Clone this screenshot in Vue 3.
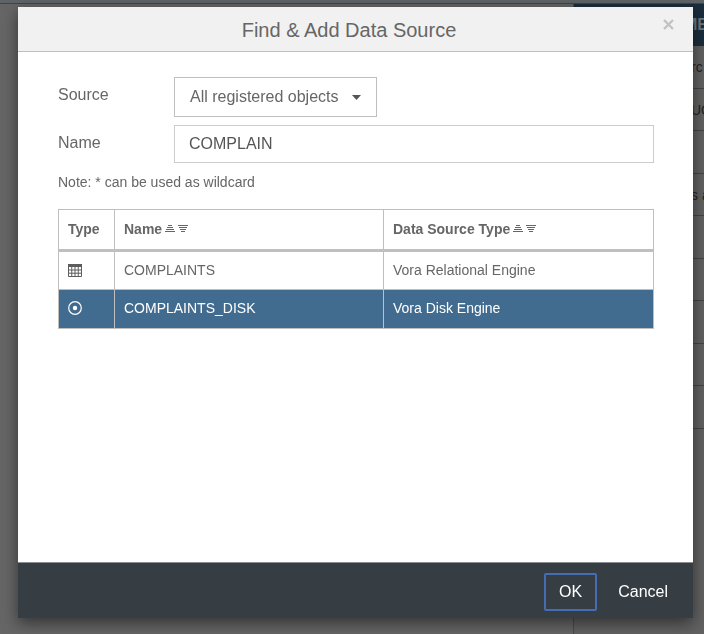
<script setup>
import { ref } from 'vue'

const source = ref('All registered objects')
const name = ref('COMPLAIN')
const selected = ref('COMPLAINTS_DISK')

const columns = [
  { label: 'Type', sortable: false },
  { label: 'Name', sortable: true },
  { label: 'Data Source Type', sortable: true },
]
const rows = [
  { kind: 'table', name: 'COMPLAINTS', type: 'Vora Relational Engine' },
  { kind: 'disk', name: 'COMPLAINTS_DISK', type: 'Vora Disk Engine' },
]
const panelRows = ['rc', 'UC', '', 's a', '', '', '', '', '']
</script>

<template>
  <div class="page">
    <div class="workspace">
      <div class="toolbar"></div>
      <div class="columns">
        <div class="canvas"></div>
        <aside class="side">
          <div class="side-head">ME</div>
          <div v-for="(text, i) in panelRows" :key="i" class="side-row">{{ text }}</div>
        </aside>
      </div>
    </div>

    <div class="overlay">
      <section class="dialog" role="dialog" aria-modal="true" aria-labelledby="dialog-title">
        <header class="dialog-head">
          <h1 id="dialog-title">Find &amp; Add Data Source</h1>
          <button class="close" type="button" aria-label="Close">
            <svg width="11" height="11" viewBox="0 0 11 11">
              <path d="M1 1 L10 10 M10 1 L1 10" fill="none" stroke="#c2c2c2" stroke-width="2.4" />
            </svg>
          </button>
        </header>

        <div class="dialog-body">
          <div class="field">
            <label for="source">Source</label>
            <div class="select">
              <select id="source" v-model="source">
                <option>All registered objects</option>
              </select>
              <svg class="caret" width="9" height="5" viewBox="0 0 9 5">
                <path d="M0 0 H9 L4.5 5 Z" fill="#555" />
              </svg>
            </div>
          </div>
          <div class="field">
            <label for="name">Name</label>
            <input id="name" v-model="name" type="text" />
          </div>
          <p class="note">Note: * can be used as wildcard</p>

          <table>
            <colgroup>
              <col class="col-type" />
              <col class="col-name" />
              <col />
            </colgroup>
            <thead>
              <tr>
                <th v-for="column in columns" :key="column.label" scope="col">
                  <span class="th">
                    {{ column.label }}
                    <svg v-if="column.sortable" width="23" height="8" viewBox="0 0 23 8">
                      <path
                        d="M3 .5 H7 M2 2.5 H8 M1 4.5 H9 M0 6.5 H10 M13 .5 H23 M14 2.5 H22 M15 4.5 H21 M16 6.5 H20"
                        fill="none"
                        stroke="#666"
                        stroke-width="1"
                      />
                    </svg>
                  </span>
                </th>
              </tr>
            </thead>
            <tbody>
              <tr
                v-for="row in rows"
                :key="row.name"
                :class="{ selected: row.name === selected }"
                @click="selected = row.name"
              >
                <td class="kind">
                  <svg v-if="row.kind === 'table'" width="14" height="14" viewBox="0 0 14 14">
                    <path d="M0 1 H14 V14 H0 Z" fill="#fff" />
                    <path d="M0 1 H14 V4 H0 Z" fill="#5c5c5c" />
                    <path
                      d="M.5 4 V13.5 H13.5 V4 M3.75 4 V13 M7 4 V13 M10.25 4 V13 M1 7 H13 M1 10.2 H13"
                      fill="none"
                      stroke="#5c5c5c"
                      stroke-width="1"
                    />
                  </svg>
                  <svg v-else width="14" height="14" viewBox="0 0 14 14">
                    <circle cx="7" cy="7" r="6.3" fill="none" stroke="#fff" stroke-width="1.2" />
                    <circle cx="7" cy="7" r="2.2" fill="#fff" />
                  </svg>
                </td>
                <td>{{ row.name }}</td>
                <td>{{ row.type }}</td>
              </tr>
            </tbody>
          </table>
        </div>

        <footer class="dialog-foot">
          <button class="action primary" type="button">OK</button>
          <button class="action" type="button">Cancel</button>
        </footer>
      </section>
    </div>
  </div>
</template>

<style>
body {
  margin: 0;
  overflow: hidden;
}
</style>

<style scoped>
.page {
  min-height: 100vh;
  font-family: "Liberation Sans", Arial, sans-serif;
  color: #666;
  background: #666;
}
.page *,
.page {
  box-sizing: border-box;
}
.workspace {
  display: flex;
  flex-direction: column;
  min-height: 100vh;
}
.toolbar {
  height: 4px;
  background: #5f6467;
  border-bottom: 1px solid #444;
}
.columns {
  flex: 1;
  display: grid;
  grid-template-columns: 1fr 131px;
}
.side {
  border-left: 1px solid #4a4a4a;
  background: #626262;
  overflow: hidden;
  white-space: nowrap;
}
.side-head,
.side-row {
  height: 42px;
  line-height: 42px;
}
.side-head {
  padding-left: 110px;
  background: #1b2e3d;
  color: #707a82;
  font-size: 16px;
  font-weight: bold;
}
.side-row {
  padding-left: 117px;
  border-bottom: 1px solid #444;
  color: #242424;
  font-size: 14px;
}
.side-row:nth-child(even) {
  height: 43px;
}
.overlay {
  position: fixed;
  inset: 0;
  display: flex;
  padding: 7px 11px 16px 18px;
}
.dialog {
  flex: 1;
  display: flex;
  flex-direction: column;
  background: #fff;
  box-shadow: 0 5px 15px rgba(0, 0, 0, 0.5);
}
.dialog-head {
  position: relative;
  padding: 9px 53px 7px 40px;
  background: #f1f1f1;
  border-bottom: 1px solid #bfbfbf;
  text-align: center;
}
h1 {
  margin: 0;
  font-size: 20px;
  line-height: 28px;
  font-weight: normal;
}
.close {
  position: absolute;
  top: 7px;
  right: 14px;
  display: flex;
  padding: 5px;
  border: 0;
  background: none;
}
.dialog-body {
  flex: 1;
  padding: 25px 39px 24px 40px;
}
.field {
  display: grid;
  grid-template-columns: 116px 1fr;
  margin-bottom: 8px;
}
label {
  padding-top: 8px;
  font-size: 16px;
  line-height: 20px;
}
.select {
  position: relative;
  justify-self: start;
}
select,
input {
  display: block;
  margin: 0;
  border: 1px solid #bfbfbf;
  border-radius: 0;
  background: #fff;
  color: #666;
  font-family: inherit;
  font-size: 16px;
}
select {
  width: 203px;
  height: 40px;
  padding: 0 36px 2px 15px;
  appearance: none;
}
.caret {
  position: absolute;
  top: 18px;
  right: 16px;
  pointer-events: none;
}
input {
  width: 100%;
  height: 38px;
  padding: 0 14px;
  border-color: #ccc;
  color: #555;
}
.note {
  margin: 9px 0 17px;
  font-size: 14px;
  line-height: 20px;
}
table {
  width: 100%;
  border-collapse: collapse;
  table-layout: fixed;
  font-size: 14px;
  line-height: 20px;
}
.col-type {
  width: 56px;
}
.col-name {
  width: 269px;
}
th,
td {
  height: 39px;
  padding: 0 9px 2px;
  border: 1px solid #bfbfbf;
  text-align: left;
}
th {
  height: 41px;
  border-bottom-width: 3px;
}
.th {
  display: flex;
  align-items: center;
  gap: 3px;
}
.kind svg {
  display: block;
}
.selected td {
  background: #416c8f;
  color: #fff;
}
.dialog-foot {
  display: flex;
  justify-content: flex-end;
  gap: 6px;
  padding: 10px 10px 7px;
  border-top: 1px solid #8a8d90;
  background: #363d43;
}
.action {
  height: 38px;
  padding: 0 13px;
  border: 2px solid transparent;
  border-radius: 2px;
  background: none;
  color: #fff;
  font-family: inherit;
  font-size: 16px;
}
.primary {
  border-color: #446db3;
}
</style>
